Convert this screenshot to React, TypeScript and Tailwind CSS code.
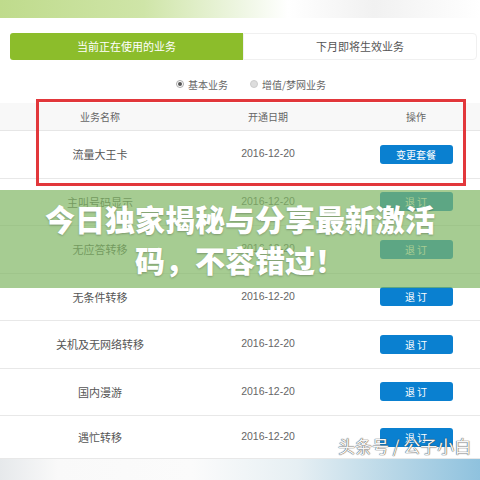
import React from "react";

const rows = [
  { name: "流量大王卡", btn: "变更套餐" },
  { name: "主叫号码显示", btn: "退 订" },
  { name: "无应答转移", btn: "退 订" },
  { name: "无条件转移", btn: "退 订" },
  { name: "关机及无网络转移", btn: "退 订" },
  { name: "国内漫游", btn: "退 订" },
  { name: "遇忙转移", btn: "退 订" },
];

export default function App() {
  return (
    <div className="relative w-[480px] h-[480px] overflow-hidden bg-white font-['Noto_Sans_CJK_SC',sans-serif] text-[#555]">
      {/* top band */}
      <div className="h-[18px] bg-[linear-gradient(90deg,#bfdb8c_0%,#cfe5a8_30%,#eef6e2_50%,#ffffff_60%,#f1f1f1_78%,#ffffff_100%)]" />

      {/* tabs */}
      <div className="mt-[15px] mx-[10px] mr-[3px] h-[27px] flex text-[11px]">
        <div className="w-[233px] bg-[#8cbd2b] rounded-l-[3px] text-white flex items-center justify-center">
          当前正在使用的业务
        </div>
        <div className="flex-1 border border-[#f0f0f0] rounded-r-[4px] flex items-center justify-center text-[#555]">
          下月即将生效业务
        </div>
      </div>

      {/* radios */}
      <div className="mt-[16px] h-[16px] flex items-center text-[10px] text-[#666]">
        <div className="ml-[176px] flex items-center gap-[4px]">
          <span className="w-[8px] h-[8px] rounded-full border border-[#aaa] flex items-center justify-center">
            <span className="w-[4px] h-[4px] rounded-full bg-[#555]" />
          </span>
          <span>基本业务</span>
        </div>
        <div className="ml-[22px] flex items-center gap-[4px]">
          <span className="w-[8px] h-[8px] rounded-full bg-[#ddd] border border-[#ccc]" />
          <span>增值/梦网业务</span>
        </div>
      </div>

      {/* table */}
      <div className="mt-[11px]">
        <div className="h-[28px] bg-[#f8f8f8] border-b border-[#e6e6e6] grid grid-cols-[200px_136px_144px] items-center text-[10px] text-[#666]">
          <div className="text-center">业务名称</div>
          <div className="text-center">开通日期</div>
          <div className="text-center pl-[16px]">操作</div>
        </div>
        {rows.map((r, i) => (
          <div
            key={i}
            className={
              (i === rows.length - 1 ? "h-[43px] " : "h-[47.5px] ") +
              "border-b border-[#e8e8e8] grid grid-cols-[200px_136px_144px] items-center text-[11px]"
            }
          >
            <div className="text-center text-[#555]">{r.name}</div>
            <div className="text-center text-[#666] font-['Liberation_Sans',sans-serif] text-[10.5px]">2016-12-20</div>
            <div className="flex justify-center pl-[16px]">
              <div className="w-[73px] h-[19px] rounded-[3px] bg-[#0a80d0] text-white text-[10px] flex items-center justify-center">
                {r.btn}
              </div>
            </div>
          </div>
        ))}
      </div>

      {/* bottom band */}
      <div className="h-[24px] bg-[linear-gradient(90deg,#e6e9eb_0%,#f9f9f9_12%,#fbfbfb_40%,#e6eff3_62%,#bcd9e8_80%,#8fc2de_100%)]" />

      {/* red annotation box */}
      <div className="absolute left-[36px] top-[99px] w-[430px] h-[87px] border-[3px] border-[#e2373b]" />

      {/* green banner */}
      <div className="absolute left-0 right-0 top-[190px] h-[98px] bg-[rgba(128,182,100,0.7)] flex flex-col items-center justify-center text-white font-black text-[30px] leading-[41px] [text-shadow:0_1px_2px_rgba(0,0,0,0.25)]">
        <div>今日独家揭秘与分享最新激活</div>
        <div>码，不容错过！</div>
      </div>

      {/* watermark */}
      <div className="absolute left-[338px] top-[435px] text-[17px] leading-[22px] text-[#f6f6f6] [text-shadow:0_0_1px_#444,0_0_1px_#444]">
        头条号 / 公子小白
      </div>
    </div>
  );
}
